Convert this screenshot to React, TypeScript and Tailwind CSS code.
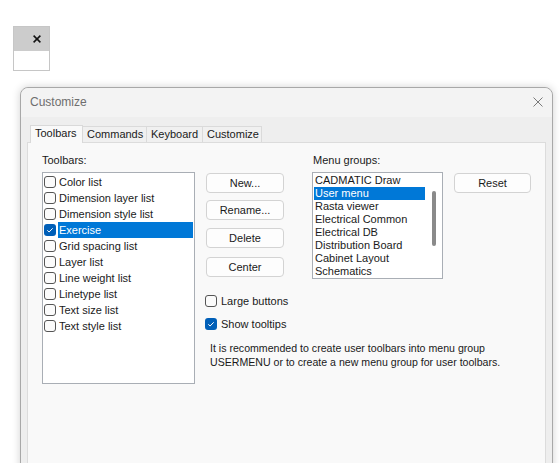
import React from "react";

const toolbars = [
  { name: "Color list", checked: false },
  { name: "Dimension layer list", checked: false },
  { name: "Dimension style list", checked: false },
  { name: "Exercise", checked: true, selected: true },
  { name: "Grid spacing list", checked: false },
  { name: "Layer list", checked: false },
  { name: "Line weight list", checked: false },
  { name: "Linetype list", checked: false },
  { name: "Text size list", checked: false },
  { name: "Text style list", checked: false },
];

const menuGroups = [
  "CADMATIC Draw",
  "User menu",
  "Rasta viewer",
  "Electrical Common",
  "Electrical DB",
  "Distribution Board",
  "Cabinet Layout",
  "Schematics",
];

const tabs = [
  { label: "Toolbars", w: "w-[53px]" },
  { label: "Commands", w: "w-[64px]" },
  { label: "Keyboard", w: "w-[56px]" },
  { label: "Customize", w: "w-[59px]" },
];

function Check({ checked }: { checked: boolean }) {
  if (checked) {
    return (
      <span className="flex h-[12px] w-[12px] shrink-0 items-center justify-center rounded-[3px] bg-[#005fb8]">
        <svg viewBox="0 0 12 12" className="h-[12px] w-[12px]">
          <path d="M3.3 6.3 5.1 8 8.7 4.3" fill="none" stroke="#ffffff" strokeWidth="1" />
        </svg>
      </span>
    );
  }
  return <span className="h-[12px] w-[12px] shrink-0 rounded-[3px] border border-[#555555] bg-[#fbfbfb]" />;
}

function Btn({ label, className }: { label: string; className?: string }) {
  return (
    <div
      className={`h-[20px] rounded-[4px] border border-[#d3d3d3] bg-[#fdfdfd] text-center leading-[18px] ${className ?? ""}`}
    >
      {label}
    </div>
  );
}

export default function App() {
  return (
    <div className="h-[463px] w-[560px] overflow-hidden bg-white pt-[26px] font-['Liberation_Sans',Arial,sans-serif] text-[11px] text-[#1a1a1a]">
      {/* little floating tab */}
      <div className="ml-[13px] h-[45px] w-[37px] border border-[#c6c6c6] bg-white">
        <div className="flex h-[24px] items-center justify-end bg-[#cccccc] pr-[8px]">
          <svg viewBox="0 0 8 8" className="h-[8px] w-[8px]">
            <path d="M0.6 0.6 7.4 7.4M7.4 0.6 0.6 7.4" stroke="#111111" strokeWidth="1.5" />
          </svg>
        </div>
      </div>

      {/* dialog */}
      <div className="ml-[20px] mt-[16px] w-[533px] rounded-t-[8px] border border-[#a8a8a8] bg-[#f0f0f0] shadow-[0_0_8px_rgba(0,0,0,0.18)]">
        <div className="flex h-[29px] items-center justify-between rounded-t-[8px] bg-[#f3f3f3] pb-[1px] pl-[9px] pr-[9px]">
          <span className="text-[12px] text-[#6e6e6e]">Customize</span>
          <svg viewBox="0 0 10 10" className="h-[10px] w-[10px]">
            <path d="M0.5 0.5 9.5 9.5M9.5 0.5 0.5 9.5" stroke="#7a7a7a" strokeWidth="1" />
          </svg>
        </div>

        <div className="bg-[#eeeeee] px-[6px] pt-[8px]">
          <div className="flex h-[17px] items-end pl-[3px]">
            {tabs.map((t, i) =>
              i === 0 ? (
                <div
                  key={t.label}
                  className={`${t.w} relative z-10 -mb-px h-[18px] border border-b-0 border-[#d9d9d9] bg-[#f9f9f9] pl-[4px] leading-[15px]`}
                >
                  {t.label}
                </div>
              ) : (
                <div
                  key={t.label}
                  className={`${t.w} h-[16px] border border-b-0 border-l-0 border-[#dadada] bg-[#f0f0f0] pl-[4px] leading-[15px]`}
                >
                  {t.label}
                </div>
              ),
            )}
          </div>

          <div className="flex h-[330px] border border-[#dcdcdc] bg-[#f9f9f9] pl-[14px] pt-[10px]">
            {/* toolbars list */}
            <div className="w-[153px]">
              <div className="h-[14px] leading-[14px]">Toolbars:</div>
              <div className="mt-[5px] h-[212px] border border-[#a9aeb5] bg-white pl-[1px] pr-[1px] pt-[1px]">
                {toolbars.map((t) => (
                  <div key={t.name} className="flex h-[16px] items-center">
                    <Check checked={t.checked} />
                    <span
                      className={`ml-[2px] h-[16px] flex-1 whitespace-nowrap pl-[1px] leading-[16px] ${
                        t.selected ? "bg-[#0078d7] text-white" : ""
                      }`}
                    >
                      {t.name}
                    </span>
                  </div>
                ))}
              </div>
            </div>

            {/* right side */}
            <div className="ml-[10px] flex flex-col">
              <div className="flex items-start">
                <div className="ml-[1px] w-[78px] pt-[20px]">
                  <Btn label="New..." />
                  <Btn label="Rename..." className="mt-[7px]" />
                  <Btn label="Delete" className="mt-[8px]" />
                  <Btn label="Center" className="mt-[9px]" />
                </div>

                <div className="ml-[28px] w-[131px]">
                  <div className="h-[14px] pl-[1px] leading-[14px]">Menu groups:</div>
                  <div className="mt-[5px] flex h-[107px] overflow-hidden border border-[#a9aeb5] bg-white pt-[1px]">
                    <div className="w-[112px] pl-[1px]">
                      {menuGroups.map((g, i) => (
                        <div
                          key={g}
                          className={`h-[13px] whitespace-nowrap pl-[1px] leading-[13px] ${
                            i === 1 ? "bg-[#0078d7] text-white" : ""
                          }`}
                        >
                          {g}
                        </div>
                      ))}
                    </div>
                    <div className="flex flex-1 justify-center pt-[17px]">
                      <div className="ml-[1px] h-[55px] w-[4px] rounded-full bg-[#8a8a8a]" />
                    </div>
                  </div>
                </div>

                <Btn label="Reset" className="ml-[11px] mt-[20px] w-[77px]" />
              </div>

              <div className="mt-[14px] flex h-[16px] items-center">
                <Check checked={false} />
                <span className="ml-[4px]">Large buttons</span>
              </div>
              <div className="mt-[7px] flex h-[16px] items-center">
                <Check checked />
                <span className="ml-[4px]">Show tooltips</span>
              </div>

              <p className="ml-[5px] mt-[9px] whitespace-nowrap text-[10.6px] leading-[14px]">
                It is recommended to create user toolbars into menu group
                <br />
                USERMENU or to create a new menu group for user toolbars.
              </p>
            </div>
          </div>
        </div>
      </div>
    </div>
  );
}
